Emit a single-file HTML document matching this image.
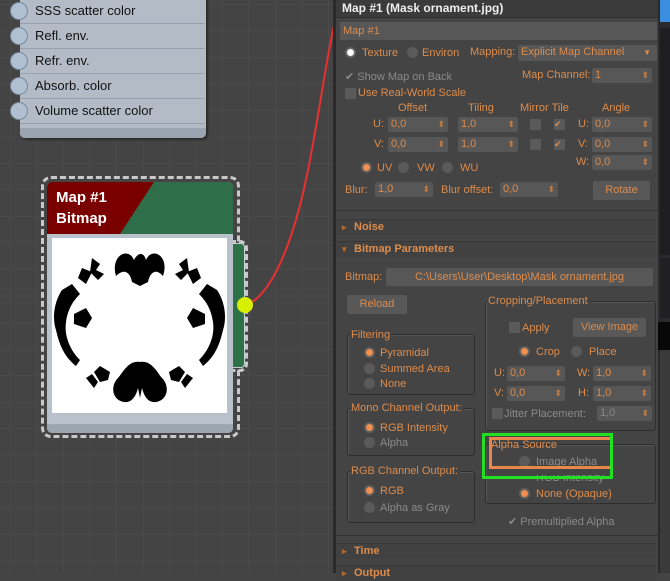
<!DOCTYPE html>
<html><head><meta charset="utf-8"><style>
*{margin:0;padding:0;box-sizing:border-box}
body{width:670px;height:573px;overflow:hidden;background:#444;font-family:"Liberation Sans",sans-serif;font-size:11px;position:relative}
.a{position:absolute;white-space:nowrap}
.grid{position:absolute;left:0;top:0;width:334px;height:573px;background-color:#444;background-image:linear-gradient(#4a4a4a 1px,transparent 1px),linear-gradient(90deg,#4a4a4a 1px,transparent 1px);background-size:26.5px 26.5px;background-position:10px 4px}
.o{color:#dd8c4c}
.g{color:#8a8a8a}
.f{position:absolute;background:#575757;border-radius:2px;color:#dd8c4c;padding-left:3px;line-height:15px;height:15px}
.f:after{content:"⬍";position:absolute;right:3px;top:0;font-size:9px;color:#c07a40}
.nf:after{content:""}
.cb{position:absolute;width:11px;height:11px;background:#5a5a5a}
.rd{position:absolute;width:11px;height:11px;border-radius:50%;background:#5a5a5a}
.rd.on{background:radial-gradient(circle,#f09050 0 3px,#5e5e5e 4px)}
.rd.w{background:radial-gradient(circle,#fff 0 3px,#5e5e5e 4px)}
.btn{position:absolute;background:#585858;border-radius:2px;color:#dd8c4c;text-align:center;line-height:18px;height:19px}
.grp{position:absolute;border:1px solid #2e2e2e;border-radius:3px;box-shadow:inset 1px 1px 0 #555}
.hd{position:absolute;left:336px;width:320px;height:16px;background:#414141;border-top:1px solid #383838;color:#dd8c4c;font-weight:bold;line-height:15px;padding-left:18px}
.hd:before{content:"▸";position:absolute;left:6px;font-size:9px;color:#b06a30}
.hd.op:before{content:"▾"}
.row{position:absolute;left:20px;width:185px;height:25px;border-bottom:1px solid #95a1ad;color:#111;font-size:13px;line-height:24px;padding-left:15px}
.pin{position:absolute;left:10px;width:18px;height:18px;border-radius:50%;background:#b0bfd2;border:1px solid #7a8898}
</style></head><body>
<div class="grid"></div>
<!-- top node -->
<div class="a" style="left:20px;top:-5px;width:186px;height:143px;background:#b3bcc6;border-radius:0 0 5px 5px;box-shadow:2px 2px 2px #2a2a2a"></div>
<div class="row" style="top:-1px">SSS scatter color</div>
<div class="row" style="top:24px">Refl. env.</div>
<div class="row" style="top:49px">Refr. env.</div>
<div class="row" style="top:74px">Absorb. color</div>
<div class="row" style="top:99px">Volume scatter color</div>
<div class="a" style="left:20px;top:128px;width:186px;height:10px;background:#9aa5b1;border-radius:0 0 5px 5px"></div>
<div class="pin" style="top:2px"></div><div class="pin" style="top:27px"></div><div class="pin" style="top:52px"></div><div class="pin" style="top:77px"></div><div class="pin" style="top:102px"></div>
<!-- bitmap node -->
<div class="a" style="left:41px;top:176px;width:199px;height:262px;border:3px dashed #c8c8c8;border-radius:10px"></div>
<div class="a" style="left:230px;top:240px;width:18px;height:132px;border:3px dashed #c8c8c8;border-left:none;border-radius:0 8px 8px 0"></div>
<div class="a" style="left:230px;top:243px;width:15px;height:125px;background:#2e7047;border-radius:0 4px 4px 0;border:1px solid #c8d0d8;border-left:none"></div>
<div class="a" style="left:47px;top:182px;width:186px;height:251px;background:#b9c1ca;border-radius:5px;overflow:hidden">
<svg width="186" height="52" style="position:absolute;left:0;top:0"><rect width="186" height="52" fill="#2e6e48"/><polygon points="0,0 107,0 73,52 0,52" fill="#7a0000"/></svg>
<div class="a" style="left:9px;top:5px;color:#fff;font-weight:bold;font-size:15px;line-height:21px">Map #1<br>Bitmap</div>
<div class="a" style="left:0;top:242px;width:186px;height:9px;background:#9ca6b0"></div>
</div>
<svg class="a" style="left:52px;top:238px" width="175" height="175" viewBox="0 0 175 175">
<rect width="175" height="175" fill="#fff"/>
<g fill="#000">
<path d="M64,38 C58,18 76,8 82,22 C86,14 92,14 94,22 C100,8 118,18 111,38 C104,30 98,34 96,44 L88,48 L80,44 C78,34 72,30 64,38Z"/>
<path d="M40,20 l8,6 l-4,6 l8,4 l-6,6 l-8,-8z M135,20 l-8,6 l4,6 l-8,4 l6,6 l8,-8z"/>
<path d="M88,124 C76,122 70,136 66,140 C58,148 60,162 72,164 C80,165 84,158 86,150 L88,160 L90,150 C92,158 96,165 104,164 C116,162 118,148 110,140 C106,136 100,122 88,124Z"/>
<path d="M48,128 l10,6 l-2,8 l-8,2 l-6,-10z M127,128 l-10,6 l2,8 l8,2 l6,-10z"/>
<path d="M34,140 l6,-4 l6,8 l-4,6z M141,140 l-6,-4 l-6,8 l4,6z"/>
<path d="M10,52 C2,64 0,80 4,92 C8,110 14,120 24,128 L28,122 C18,112 12,98 14,84 C16,70 22,62 28,56 L20,46Z"/>
<path d="M165,52 C173,64 175,80 171,92 C167,110 161,120 151,128 L147,122 C157,112 163,98 161,84 C159,70 153,62 147,56 L155,46Z"/>
<path d="M22,76 l12,-6 l6,10 l-6,10 l-12,-4z M153,76 l-12,-6 l-6,10 l6,10 l12,-4z"/>
<path d="M30,30 l10,4 l-6,12 l-8,-6z M145,30 l-10,4 l6,12 l8,-6z"/>
</g></svg>
<!-- yellow dot & wire -->
<svg class="a" style="left:230px;top:0" width="110" height="330"><path d="M15,305 C35,300 60,260 78,170 C90,110 96,60 104,26" stroke="#e83030" stroke-width="2" fill="none"/><circle cx="15" cy="305" r="8" fill="#d8f000"/></svg>
<!-- panel -->
<div class="a" style="left:333px;top:0;width:3px;height:573px;background:#2a2a2a"></div>
<div class="a" style="left:336px;top:0;width:322px;height:573px;background:#444"></div>
<div class="a" style="left:336px;top:0;width:322px;height:18px;background:#3b3b3b;color:#eee;font-weight:bold;font-size:12px;line-height:17px;padding-left:6px;border-bottom:1px solid #2d2d2d">Map #1 (Mask ornament.jpg)</div>
<div class="a o" style="left:340px;top:22px;width:317px;height:18px;background:#575757;line-height:18px;padding-left:3px">Map #1</div>
<div class="rd w" style="left:345px;top:47px"></div><div class="a o" style="left:362px;top:47px">Texture</div>
<div class="rd" style="left:407px;top:47px"></div><div class="a o" style="left:422px;top:47px">Environ</div>
<div class="a o" style="left:470px;top:46px">Mapping:</div>
<div class="f nf" style="left:518px;top:45px;width:139px;height:16px">Explicit Map Channel<span style="position:absolute;right:6px;font-size:8px">▼</span></div>
<div class="a g" style="left:345px;top:70px">✔ Show Map on Back</div>
<div class="a o" style="left:522px;top:69px">Map Channel:</div>
<div class="f" style="left:592px;top:68px;width:60px">1</div>
<div class="cb" style="left:345px;top:88px"></div><div class="a o" style="left:358px;top:87px">Use Real-World Scale</div>
<div class="a o" style="left:398px;top:102px">Offset</div><div class="a o" style="left:468px;top:102px">Tiling</div><div class="a o" style="left:520px;top:102px">Mirror Tile</div><div class="a o" style="left:602px;top:102px">Angle</div>
<div class="a o" style="left:373px;top:118px">U:</div><div class="f" style="left:388px;top:117px;width:60px">0,0</div>
<div class="f" style="left:458px;top:117px;width:60px">1,0</div>
<div class="cb" style="left:530px;top:119px"></div><div class="cb o" style="left:554px;top:119px;font-size:9px;line-height:11px">✔</div>
<div class="a o" style="left:578px;top:118px">U:</div><div class="f" style="left:592px;top:117px;width:60px">0,0</div>
<div class="a o" style="left:374px;top:138px">V:</div><div class="f" style="left:388px;top:137px;width:60px">0,0</div>
<div class="f" style="left:458px;top:137px;width:60px">1,0</div>
<div class="cb" style="left:530px;top:139px"></div><div class="cb o" style="left:554px;top:139px;font-size:9px;line-height:11px">✔</div>
<div class="a o" style="left:578px;top:138px">V:</div><div class="f" style="left:592px;top:137px;width:60px">0,0</div>
<div class="a o" style="left:576px;top:156px">W:</div><div class="f" style="left:592px;top:155px;width:60px">0,0</div>
<div class="rd on" style="left:361px;top:162px"></div><div class="a o" style="left:377px;top:162px">UV</div>
<div class="rd" style="left:398px;top:162px"></div><div class="a o" style="left:417px;top:162px">VW</div>
<div class="rd" style="left:442px;top:162px"></div><div class="a o" style="left:460px;top:162px">WU</div>
<div class="a o" style="left:345px;top:184px">Blur:</div><div class="f" style="left:375px;top:182px;width:58px">1,0</div>
<div class="a o" style="left:441px;top:184px">Blur offset:</div><div class="f" style="left:500px;top:182px;width:58px">0,0</div>
<div class="btn" style="left:593px;top:181px;width:57px">Rotate</div>
<div class="a" style="left:336px;top:210px;width:322px;height:1px;background:#333"></div>
<div class="hd" style="top:219px">Noise</div>
<div class="hd op" style="top:241px">Bitmap Parameters</div>
<div class="a o" style="left:345px;top:271px">Bitmap:</div>
<div class="a o" style="left:386px;top:268px;width:267px;height:18px;background:#575757;border-radius:2px;text-align:center;line-height:18px">C:\Users\User\Desktop\Mask ornament.jpg</div>
<div class="btn" style="left:347px;top:295px;width:60px">Reload</div>
<div class="grp" style="left:485px;top:301px;width:171px;height:130px"></div>
<div class="a o" style="left:488px;top:295px;background:#444;padding-right:2px">Cropping/Placement</div>
<div class="cb" style="left:509px;top:322px"></div><div class="a o" style="left:522px;top:322px">Apply</div>
<div class="btn" style="left:573px;top:318px;width:73px">View Image</div>
<div class="rd on" style="left:519px;top:346px"></div><div class="a o" style="left:536px;top:346px">Crop</div>
<div class="rd" style="left:571px;top:346px"></div><div class="a o" style="left:589px;top:346px">Place</div>
<div class="a o" style="left:494px;top:367px">U:</div><div class="f" style="left:507px;top:366px;width:58px">0,0</div>
<div class="a o" style="left:577px;top:367px">W:</div><div class="f" style="left:593px;top:366px;width:58px">1,0</div>
<div class="a o" style="left:494px;top:387px">V:</div><div class="f" style="left:507px;top:386px;width:58px">0,0</div>
<div class="a o" style="left:578px;top:387px">H:</div><div class="f" style="left:593px;top:386px;width:58px">1,0</div>
<div class="cb" style="left:492px;top:408px"></div><div class="a g" style="left:504px;top:408px">Jitter Placement:</div>
<div class="f" style="left:597px;top:406px;width:55px;color:#888">1,0</div>
<div class="grp" style="left:347px;top:334px;width:128px;height:61px"></div>
<div class="a o" style="left:351px;top:329px;background:#444;padding-right:2px">Filtering</div>
<div class="rd on" style="left:364px;top:347px"></div><div class="a o" style="left:380px;top:347px">Pyramidal</div>
<div class="rd" style="left:364px;top:363px"></div><div class="a o" style="left:380px;top:363px">Summed Area</div>
<div class="rd" style="left:364px;top:378px"></div><div class="a o" style="left:380px;top:378px">None</div>
<div class="grp" style="left:347px;top:408px;width:128px;height:48px"></div>
<div class="a o" style="left:351px;top:402px;background:#444;padding-right:2px">Mono Channel Output:</div>
<div class="rd on" style="left:364px;top:422px"></div><div class="a o" style="left:380px;top:422px">RGB Intensity</div>
<div class="rd" style="left:364px;top:437px"></div><div class="a g" style="left:380px;top:437px">Alpha</div>
<div class="grp" style="left:347px;top:471px;width:128px;height:52px"></div>
<div class="a o" style="left:351px;top:465px;background:#444;padding-right:2px">RGB Channel Output:</div>
<div class="rd on" style="left:364px;top:485px"></div><div class="a o" style="left:380px;top:485px">RGB</div>
<div class="rd" style="left:364px;top:502px"></div><div class="a g" style="left:380px;top:502px">Alpha as Gray</div>
<div class="grp" style="left:485px;top:444px;width:171px;height:60px"></div>
<div class="a o" style="left:491px;top:439px">Alpha Source</div>
<div class="rd" style="left:519px;top:456px"></div><div class="a g" style="left:536px;top:456px">Image Alpha</div>
<div class="a g" style="left:536px;top:472px;clip-path:inset(3px 0 0 0)">RGB Intensity</div>
<div class="rd on" style="left:519px;top:488px"></div><div class="a o" style="left:536px;top:488px">None (Opaque)</div>
<div class="a" style="left:489px;top:437px;width:124px;height:32px;border:3px solid #e8864e"></div>
<div class="a" style="left:482px;top:433px;width:131px;height:46px;border:3px solid #22e022"></div>
<div class="a g" style="left:508px;top:515px">✔ Premultiplied Alpha</div>
<div class="a" style="left:336px;top:535px;width:322px;height:1px;background:#333"></div>
<div class="hd" style="top:543px">Time</div>
<div class="hd" style="top:565px">Output</div>
<!-- right toolbar -->
<div class="a" style="left:658px;top:0;width:12px;height:573px;background:#2a2a2a"></div>
<div class="a" style="left:660px;top:0;width:10px;height:22px;background:#3a8ee0"></div>
<div class="a" style="left:660px;top:28px;width:10px;height:227px;background:#1e1e22"></div>
<div class="a" style="left:660px;top:258px;width:10px;height:60px;background:#202024"></div>
<div class="a" style="left:658px;top:322px;width:12px;height:28px;background:#080808"></div>
<div class="a" style="left:660px;top:350px;width:10px;height:223px;background:#3a3a3a"></div>
</body></html>
